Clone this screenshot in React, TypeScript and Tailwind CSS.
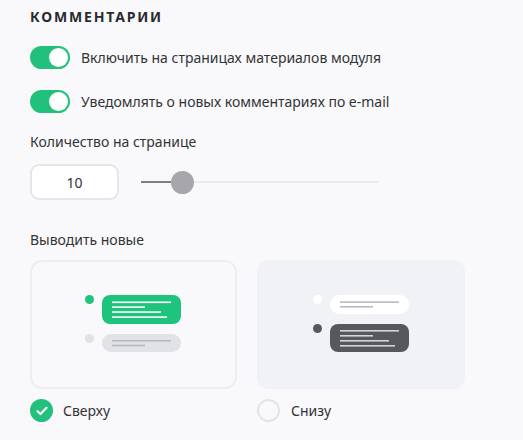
import React from "react";

function Toggle() {
  return (
    <div className="w-[40px] h-[23px] rounded-full bg-[#22c17b] flex items-center justify-end pr-[2px] shrink-0">
      <div className="w-[19px] h-[19px] rounded-full bg-white" />
    </div>
  );
}

function TopIllustration() {
  return (
    <svg width="100" height="60" viewBox="0 0 100 60">
      <circle cx="4.5" cy="4.5" r="4.5" fill="#1fc47c" />
      <rect x="17" y="0" width="79" height="29" rx="8" fill="#1fc47c" />
      <rect x="27" y="6.5" width="59" height="1.6" fill="#fff" />
      <rect x="27" y="11.3" width="33" height="1.6" fill="#fff" />
      <rect x="27" y="16.3" width="49" height="1.6" fill="#fff" />
      <rect x="27" y="21.3" width="55" height="1.6" fill="#fff" />
      <circle cx="4.5" cy="43.5" r="4.5" fill="#e1e2e6" />
      <rect x="17" y="39" width="79" height="18" rx="9" fill="#e1e2e6" />
      <rect x="27" y="45" width="59" height="1.6" fill="#b8b9bd" />
      <rect x="27" y="49.7" width="33" height="1.6" fill="#b8b9bd" />
    </svg>
  );
}

function BottomIllustration() {
  return (
    <svg width="100" height="60" viewBox="0 0 100 60">
      <circle cx="4.5" cy="4.5" r="4.5" fill="#ffffff" />
      <rect x="17" y="0" width="79" height="19" rx="9.5" fill="#ffffff" />
      <rect x="27" y="6.3" width="59" height="1.6" fill="#b8b9bd" />
      <rect x="27" y="11" width="33" height="1.6" fill="#b8b9bd" />
      <circle cx="4.5" cy="33.5" r="4.5" fill="#57585c" />
      <rect x="17" y="29" width="79" height="28" rx="8" fill="#57585c" />
      <rect x="27" y="35" width="59" height="1.6" fill="#d4d5d8" />
      <rect x="27" y="40" width="33" height="1.6" fill="#d4d5d8" />
      <rect x="27" y="45" width="49" height="1.6" fill="#d4d5d8" />
      <rect x="27" y="50" width="55" height="1.6" fill="#d4d5d8" />
    </svg>
  );
}

export default function App() {
  return (
    <div
      className="w-[523px] h-[440px] bg-[#f9f9fb] text-[#333336] pl-[30px] pt-[8px] overflow-hidden"
      style={{ fontFamily: '"Noto Sans", "Open Sans", sans-serif' }}
    >
      <div className="text-[14px] font-bold tracking-[0.13em] text-[#2a2a2e] leading-[18px]">
        КОММЕНТАРИИ
      </div>

      <div className="flex items-center gap-[11px] mt-[20px]">
        <Toggle />
        <span className="text-[14px] leading-[20px]">Включить на страницах материалов модуля</span>
      </div>
      <div className="flex items-center gap-[11px] mt-[21px]">
        <Toggle />
        <span className="text-[14px] leading-[20px]">Уведомлять о новых комментариях по e-mail</span>
      </div>

      <div className="text-[14px] leading-[20px] mt-[19px]">Количество на странице</div>
      <div className="flex items-center mt-[12px]">
        <div className="w-[89px] h-[36px] bg-white border-2 border-[#e6e6ea] rounded-[9px] flex items-center justify-center text-[14px]">
          10
        </div>
        <div className="relative ml-[22px] w-[238px] h-[24px] flex items-center">
          <div className="w-[41px] h-[2px] bg-[#7e7e84]" />
          <div className="flex-1 h-[2px] bg-[#ebebef]" />
          <div className="absolute left-[30px] top-[1px] w-[23px] h-[23px] rounded-full bg-[#a6a6ab]" />
        </div>
      </div>

      <div className="text-[14px] leading-[20px] mt-[30px]">Выводить новые</div>

      <div className="flex gap-[20px] mt-[10px]">
        <div className="w-[207px] h-[129px] rounded-[12px] border-2 border-[#eeeef1] bg-[#f9f9fb] flex items-center justify-center">
          <div className="ml-[3px] mt-[1px]">
            <TopIllustration />
          </div>
        </div>
        <div className="w-[208px] h-[129px] rounded-[12px] bg-[#f1f2f5] flex items-center justify-center">
          <div className="ml-[4px] mt-[1px]">
            <BottomIllustration />
          </div>
        </div>
      </div>

      <div className="flex mt-[10px]">
        <div className="w-[227px] flex items-center gap-[10px]">
          <div className="w-[23px] h-[23px] rounded-full bg-[#22c17b] flex items-center justify-center">
            <svg width="12" height="10" viewBox="0 0 12 10">
              <path d="M1.5 5.2 L4.5 8 L10.5 1.8" stroke="#fff" strokeWidth="2.2" fill="none" strokeLinecap="round" strokeLinejoin="round" />
            </svg>
          </div>
          <span className="text-[14px] leading-[20px]">Сверху</span>
        </div>
        <div className="flex items-center gap-[11px]">
          <div className="w-[23px] h-[23px] rounded-full border-2 border-[#e4e4e8] bg-[#f9f9fb]" />
          <span className="text-[14px] leading-[20px]">Снизу</span>
        </div>
      </div>
    </div>
  );
}
